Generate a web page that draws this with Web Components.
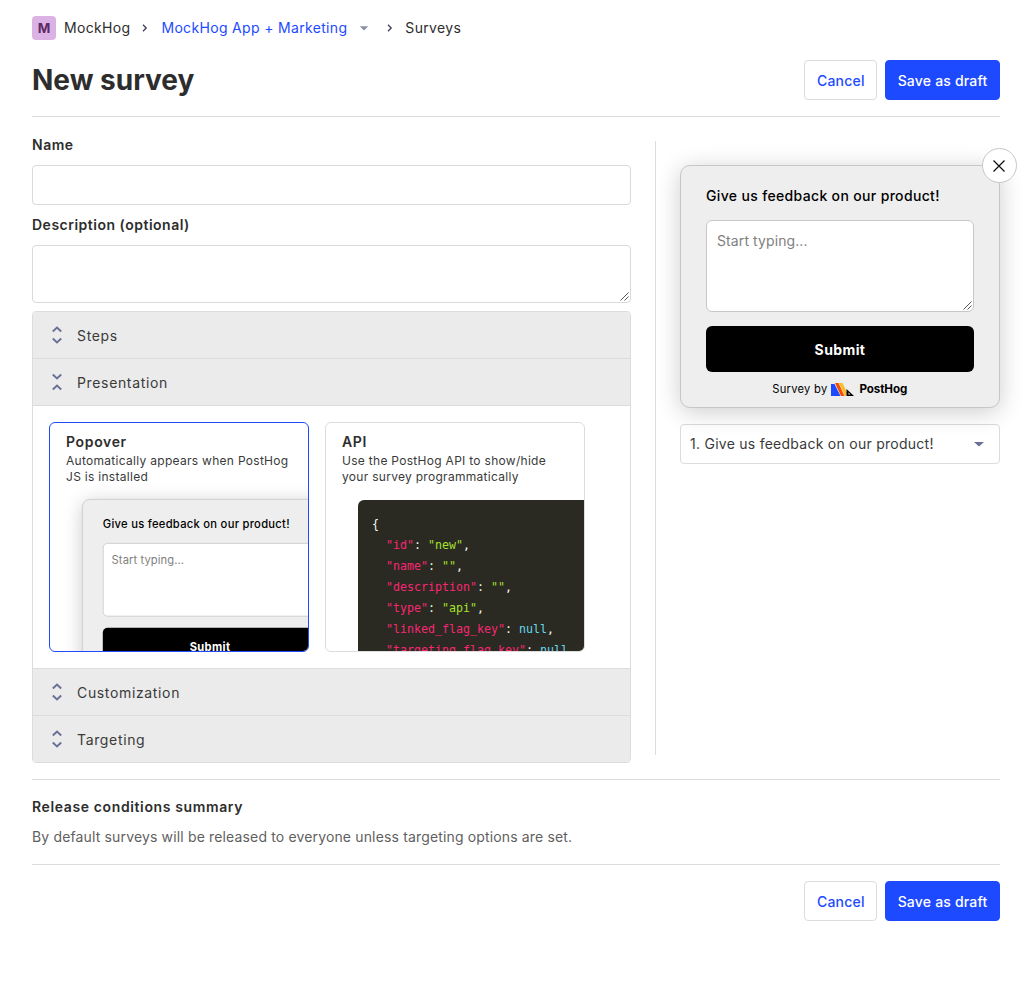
<!DOCTYPE html>
<html lang="en"><head><meta charset="utf-8"><title>New survey</title>
<style>
html,body{margin:0;background:#fff}
body{font-family:Inter,"Liberation Sans",sans-serif;font-size:14px;color:#2d2d2d;letter-spacing:.15px}
</style></head><body>
<template id="t-page"><style>
:host{display:block;padding:16px 32px 0;box-sizing:border-box;width:1032px;min-height:985px}
.form{display:flex;padding-top:24px;border-top:1px solid #dcdcdc}
.left{width:599px;flex:none;display:flex;flex-direction:column;padding-bottom:16px}
.sep{width:1px;background:#dcdcdc;margin:0 24px;flex:none;height:614px}
.right{width:320px;flex:none;padding-top:24px}
hr{border:0;border-top:1px solid #dcdcdc;margin:0}
.sum{padding:16px 0;font-size:14px}
.sum b{display:block;font-weight:600;line-height:22px;margin-bottom:9px;letter-spacing:.62px}
.sum p{margin:0 0 1px;color:#5f5f5f;line-height:20px}
.foot{display:flex;justify-content:flex-end;gap:8px;padding-top:16px}
.drop{margin-top:16px}
</style>
<app-breadcrumbs></app-breadcrumbs>
<page-header></page-header>
<div class="form">
 <div class="left">
  <form-field label="Name" h="40" style="margin-bottom:16px"></form-field>
  <form-field label="Description (optional)" h="58" area></form-field>
  <survey-steps></survey-steps>
 </div>
 <div class="sep"></div>
 <div class="right">
  <survey-popup closable></survey-popup>
  <select-box class="drop">1. Give us feedback on our product!</select-box>
 </div>
</div>
<hr>
<div class="sum"><b>Release conditions summary</b><p>By default surveys will be released to everyone unless targeting options are set.</p></div>
<hr>
<div class="foot"><lem-button>Cancel</lem-button><lem-button primary>Save as draft</lem-button></div>
</template>

<template id="t-crumbs"><style>
:host{display:flex;align-items:center;height:24px;font-size:14px;letter-spacing:.33px;color:#2d2d2d;line-height:22px}
span,a{padding-bottom:1px}
.av{padding:0;width:24px;height:24px;border-radius:4px;background:#dcb1e3;color:#5c2a66;font-weight:700;font-size:13.5px;display:flex;align-items:center;justify-content:center;margin-right:8px;letter-spacing:0}
.ch{width:16px;height:16px;margin:0 8px 0 7px;flex:none}
a{color:#1d4aff}
.car{width:16px;height:16px;margin:0 0 0 9px;flex:none}
</style>
<span class="av">M</span><span>MockHog</span>
<svg class="ch" viewBox="0 0 16 16" fill="none" stroke="#3a3f55" stroke-width="1.3"><path d="M6 4.8 9.2 8 6 11.2"/></svg>
<a>MockHog App + Marketing</a>
<svg class="car" viewBox="0 0 16 16"><path d="M3.8 6.3h8.4L8 10.6z" fill="#8b8fa8"/></svg>
<svg class="ch" viewBox="0 0 16 16" fill="none" stroke="#3a3f55" stroke-width="1.3" style="margin:0 8px 0 10px"><path d="M6 4.8 9.2 8 6 11.2"/></svg>
<span style="margin-left:-1px">Surveys</span>
</template>

<template id="t-header"><style>
:host{display:flex;justify-content:space-between;align-items:flex-start;height:76px;padding-top:20px;box-sizing:border-box}
h1{margin:0;font-size:28px;font-weight:700;line-height:40px;letter-spacing:0;color:#2d2d2d;position:relative;top:-.5px}
.b{display:flex;gap:8px}
</style><h1>New survey</h1><div class="b"><lem-button>Cancel</lem-button><lem-button primary>Save as draft</lem-button></div></template>

<template id="t-btn"><style>
:host{display:inline-flex;align-items:center;justify-content:center;height:40px;padding:0 11.5px;box-sizing:border-box;border:1px solid #dcdcdc;border-radius:4px;background:#fff;color:#1d4aff;font-size:14px;font-weight:500;letter-spacing:.2px}
:host([primary]){background:#1d4aff;border-color:#1d4aff;color:#fff}
</style><slot></slot></template>

<template id="t-field"><style>
:host{display:block;margin-bottom:8px}
label{display:block;font-weight:600;font-size:14px;line-height:20px;margin:-6px 0 10px;letter-spacing:.5px;color:#2d2d2d}
.i{box-sizing:border-box;border:1px solid #d9d9d9;border-radius:4px;background:#fff;position:relative;overflow:hidden}
svg{position:absolute;right:1px;bottom:1px;width:10px;height:10px}
</style><label></label><div class="i"><svg viewBox="0 0 10 10" stroke="#555" stroke-width="1" fill="none"><path d="M1.5 9.5 9.5 1.5M5.5 9.5 9.5 5.5"/></svg></div></template>

<template id="t-steps"><style>
:host{display:block;border:1px solid #dcdcdc;border-radius:4px;overflow:hidden;background:#fff}
.body{padding:16px;display:flex;gap:16px;border-bottom:1px solid #dcdcdc;align-items:flex-start;height:230px;box-sizing:content-box}
</style>
<collapse-row>Steps</collapse-row>
<collapse-row open>Presentation</collapse-row>
<div class="body">
 <type-card selected name="Popover" desc="Automatically appears when PostHog JS is installed"><survey-popup mini></survey-popup></type-card>
 <type-card name="API" desc="Use the PostHog API to show/hide your survey programmatically"><code-sample></code-sample></type-card>
</div>
<collapse-row>Customization</collapse-row>
<collapse-row last>Targeting</collapse-row>
</template>

<template id="t-row"><style>
:host{display:flex;align-items:center;height:47px;box-sizing:border-box;background:#ebebeb;border-bottom:1px solid #dcdcdc;padding-left:16px;color:#3a3a3a;font-size:14px;letter-spacing:.65px}
:host([last]){border-bottom:0;height:46px}
svg{width:16px;height:20px;margin-right:12px;flex:none}
</style><svg viewBox="0 0 16 20" fill="none" stroke="#6b7196" stroke-width="2"><path d="M3.8 6.4 8 2.6l4.2 3.8M3.8 13.6 8 17.4l4.2-3.8"/></svg><slot></slot></template>

<template id="t-card"><style>
:host{display:block;width:260px;height:230px;box-sizing:border-box;border:1px solid #dcdcdc;border-radius:6px;overflow:hidden;background:#fff;position:relative}
:host([selected]){border-color:#1d4aff}
.t{padding:9px 16px 0}
b{display:block;font-weight:600;font-size:14px;line-height:20px;letter-spacing:.65px;color:#2d2d2d}
p{margin:1px 0 0;font-size:12px;line-height:16px;color:#3a3a3a;letter-spacing:.29px;height:46px}
.c{margin:0 0 0 32px}
</style><div class="t"><b></b><p></p></div><div class="c"><slot></slot></div></template>

<template id="t-popup"><style>
:host{display:block;position:relative;width:320px;box-sizing:border-box}
.box{box-sizing:border-box;height:243px;border:1.5px solid #c9c6c6;border-radius:10px;background:#eeeeee;padding:0 25px 0 24.5px;box-shadow:0 4px 24px rgba(0,0,0,.2);display:flex;flex-direction:column;color:#000}
.q{font-weight:450;font-size:14px;line-height:20px;padding:19.5px 0 0 .5px;height:54px;box-sizing:border-box;letter-spacing:.34px}
.ta{height:92px;box-sizing:border-box;border:1.5px solid #c9c6c6;border-radius:6px;background:#fff;color:#808080;padding:10px 10px 10px 10.5px;font-size:14px;line-height:20px;letter-spacing:.1px;position:relative}
.ta svg{position:absolute;right:1px;bottom:1px;width:10px;height:10px}
.s{margin-top:14px;height:46px;border-radius:6px;background:#000;color:#fff;font-weight:700;font-size:14px;display:flex;align-items:center;justify-content:center;letter-spacing:.4px;padding-left:.5px}
.by{display:flex;align-items:center;justify-content:center;font-size:11.2px;height:34px;color:#000;gap:4px;letter-spacing:.25px}
.by b{font-weight:700;font-size:11.6px;letter-spacing:-.1px;margin-left:1px}
.by svg{width:23px;height:13px}
.x{position:absolute;top:-17px;right:-16.5px;width:35px;height:35px;box-sizing:border-box;border-radius:50%;background:#fff;border:1.5px solid #c9c6c6;display:flex;align-items:center;justify-content:center}
.x svg{width:14px;height:14px}
</style><div class="box">
<div class="q">Give us feedback on our product!</div>
<div class="ta">Start typing...<svg viewBox="0 0 10 10" stroke="#555" stroke-width="1" fill="none"><path d="M1.5 9.5 9.5 1.5M5.5 9.5 9.5 5.5"/></svg></div>
<div class="s">Submit</div>
<div class="by"><span>Survey by</span><svg viewBox="0 0 23 13"><path d="M0 1h3.5L9.5 13H0z" fill="#1d4aff"/><path d="M4 0h3.5L13.5 13H10z" fill="#f54e00"/><path d="M8 0h3.5L16 9.5 15 13h-1z" fill="#f9bd2b"/><path d="M15.5 13V6l7.5 7z" fill="#000"/><path d="M17.5 11.4V9.6l2 1.8z" fill="#eee"/></svg><b>PostHog</b></div>
</div><div class="x" part="x"><svg viewBox="0 0 14 14" stroke="#111" stroke-width="1.3" fill="none"><path d="M1.5 1.5l11 11M12.5 1.5l-11 11"/></svg></div></template>

<template id="t-code"><style>
:host{display:block;width:260px;height:180px;margin-top:1px;background:#2a2a22;border-radius:6px;padding:14px;box-sizing:border-box;font-family:"DejaVu Sans Mono","Liberation Mono",monospace;font-size:11.63px;line-height:21px;color:#f8f8f2;white-space:pre;letter-spacing:0;overflow:hidden}
i{font-style:normal;color:#f92672}u{text-decoration:none;color:#a6e22e}s{text-decoration:none;color:#66d9ef}
</style>{
  <i>"id"</i>: <u>"new"</u>,
  <i>"name"</i>: <u>""</u>,
  <i>"description"</i>: <u>""</u>,
  <i>"type"</i>: <u>"api"</u>,
  <i>"linked_flag_key"</i>: <s>null</s>,
  <i>"targeting_flag_key"</i>: <s>null</s></template>

<template id="t-select"><style>
:host{display:flex;align-items:center;justify-content:space-between;height:40px;box-sizing:border-box;border:1px solid #dcdcdc;border-radius:4px;background:#fff;padding:0 12px 2px 9px;font-size:14px;color:#3a3a3a;letter-spacing:.26px}
svg{width:16px;height:16px;margin-top:2px}
</style><slot></slot><svg viewBox="0 0 16 16"><path d="M3 6h10L8 10.6z" fill="#6b7196"/></svg></template>

<script>
function def(name,tid,init){customElements.define(name,class extends HTMLElement{constructor(){super();const r=this.attachShadow({mode:"open"});r.appendChild(document.getElementById(tid).content.cloneNode(true));}connectedCallback(){if(init)init(this,this.shadowRoot);}});}
def("lem-button","t-btn");
def("app-breadcrumbs","t-crumbs");
def("page-header","t-header");
def("form-field","t-field",(h,r)=>{r.querySelector("label").textContent=h.getAttribute("label");const i=r.querySelector(".i");i.style.height=h.getAttribute("h")+"px";if(!h.hasAttribute("area"))i.querySelector("svg").remove();});
def("collapse-row","t-row",(h,r)=>{if(h.hasAttribute("open"))r.querySelector("path").setAttribute("d","M3.8 2.6 8 6.4l4.2-3.8M3.8 17.4 8 13.6l4.2 3.8");});
def("type-card","t-card",(h,r)=>{r.querySelector("b").textContent=h.getAttribute("name");r.querySelector("p").textContent=h.getAttribute("desc");});
def("survey-popup","t-popup",(h,r)=>{if(!h.hasAttribute("closable"))r.querySelector(".x").remove();if(h.hasAttribute("mini")){h.style.transform="scale(.8)";h.style.transformOrigin="0 0";}});
def("code-sample","t-code");
def("select-box","t-select");
def("survey-steps","t-steps");
def("survey-page","t-page");
</script>
<survey-page></survey-page>
</body></html>
